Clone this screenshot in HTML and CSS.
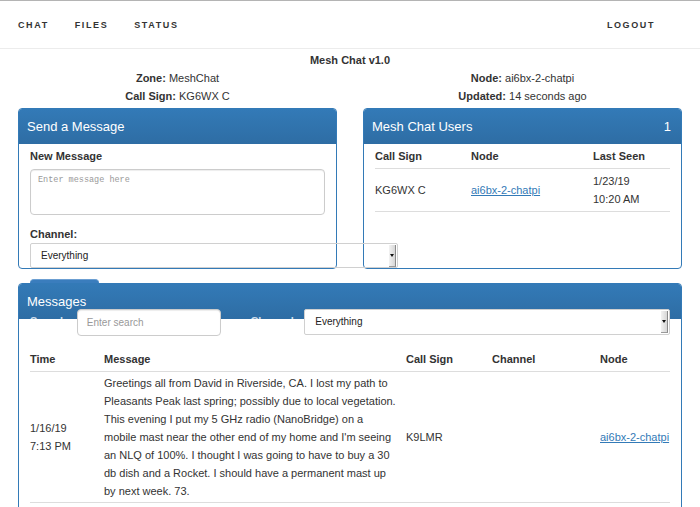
FILE: index.html
```html
<!DOCTYPE html>
<html lang="en">
<head>
<meta charset="utf-8">
<title>Mesh Chat</title>
<link rel="stylesheet" href="styles.css">
</head>
<body>
<nav class="topnav">
  <div class="nav-left">
    <a class="nav-link">CHAT</a>
    <a class="nav-link">FILES</a>
    <a class="nav-link">STATUS</a>
  </div>
  <a class="nav-link logout">LOGOUT</a>
</nav>
<main class="container">
  <div class="app-title">Mesh Chat v1.0</div>
  <div class="info">
    <div class="info-col">
      <div><b>Zone:</b> MeshChat</div>
      <div><b>Call Sign:</b> KG6WX C</div>
    </div>
    <div class="info-col">
      <div><b>Node:</b> ai6bx-2-chatpi</div>
      <div><b>Updated:</b> 14 seconds ago</div>
    </div>
  </div>

  <div class="top-row">
    <section class="panel">
      <div class="panel-heading">Send a Message</div>
      <div class="panel-body">
        <div class="field-label">New Message</div>
        <textarea class="textarea" placeholder="Enter message here"></textarea>
        <div class="field-label channel-label">Channel:</div>
        <div class="select select-send"><span class="select-text">Everything</span><span class="select-btn"></span></div>
      </div>
    </section>

    <section class="panel">
      <div class="panel-heading heading-split"><span>Mesh Chat Users</span><span>1</span></div>
      <div class="panel-body users-body">
        <table class="table users">
          <colgroup><col class="c-call"><col class="c-node"><col class="c-seen"></colgroup>
          <thead>
            <tr><th>Call Sign</th><th>Node</th><th>Last Seen</th></tr>
          </thead>
          <tbody>
            <tr><td>KG6WX C</td><td><a class="link">ai6bx-2-chatpi</a></td><td>1/23/19<br>10:20 AM</td></tr>
          </tbody>
        </table>
      </div>
    </section>
  </div>

  <div class="send-peek"></div>

  <section class="panel messages">
    <div class="panel-heading">Messages</div>
    <div class="panel-body">
      <div class="filters">
        <span class="hidden-label">Search:</span>
        <div class="input search">Enter search</div>
        <span class="hidden-label chan">Channel:</span>
        <div class="select select-filter"><span class="select-text">Everything</span><span class="select-btn"></span></div>
      </div>
      <table class="table msgs">
        <colgroup><col class="m-time"><col class="m-msg"><col class="m-call"><col class="m-chan"><col class="m-node"></colgroup>
        <thead>
          <tr><th>Time</th><th>Message</th><th>Call Sign</th><th>Channel</th><th>Node</th></tr>
        </thead>
        <tbody>
          <tr>
            <td>1/16/19<br>7:13 PM</td>
            <td class="msg-text">Greetings all from David in Riverside, CA. I lost my path to Pleasants Peak last spring; possibly due to local vegetation. This evening I put my 5 GHz radio (NanoBridge) on a mobile mast near the other end of my home and I'm seeing an NLQ of 100%. I thought I was going to have to buy a 30 db dish and a Rocket. I should have a permanent mast up by next week. 73.</td>
            <td>K9LMR</td>
            <td></td>
            <td><a class="link">ai6bx-2-chatpi</a></td>
          </tr>
        </tbody>
      </table>
    </div>
  </section>
</main>
</body>
</html>
```

FILE: styles.css
```css
* { box-sizing: border-box; }

html, body { height: 100%; }

body {
  margin: 0;
  border-top: 1px solid #b4b4b4;
  font-family: "Liberation Sans", Arial, sans-serif;
  font-size: 11px;
  line-height: 18px;
  color: #333;
  background: #fff;
  overflow: hidden;
}

.topnav {
  height: 48px;
  display: flex;
  align-items: center;
  justify-content: space-between;
  padding: 0 45px 0 18px;
  border-bottom: 1px solid #ececec;
}

.nav-left { display: flex; gap: 26px; }

.nav-link {
  font-size: 9px;
  font-weight: bold;
  letter-spacing: 1.6px;
  color: #333;
}

.container { padding: 2px 18px 0; }

.app-title {
  text-align: center;
  font-weight: bold;
}

.info {
  display: grid;
  grid-template-columns: minmax(0, 1fr) minmax(0, 1fr);
  gap: 26px;
  text-align: center;
  margin-bottom: 3px;
}

.top-row {
  display: grid;
  grid-template-columns: minmax(0, 1fr) minmax(0, 1fr);
  gap: 26px;
  height: 160px;
}

.panel {
  border: 1px solid #337ab7;
  border-radius: 4px;
  background: #fff;
  min-width: 0;
}

.panel-heading {
  height: 35px;
  line-height: 35px;
  padding: 0 8px;
  font-size: 13px;
  color: #fff;
  background: linear-gradient(#337ab7, #2e6da4);
  border-radius: 3px 3px 0 0;
}

.heading-split {
  display: flex;
  justify-content: space-between;
  padding-right: 10px;
}

.panel-body { padding: 3px 11px 0; }

.users-body { padding-top: 0; }

.field-label { font-weight: bold; }

.textarea {
  display: block;
  width: 100%;
  height: 46px;
  margin: 4px 0 10px;
  padding: 5px 7px;
  border: 1px solid #ccc;
  border-radius: 4px;
  resize: none;
  font-family: "Liberation Mono", monospace;
  font-size: 8.5px;
  box-shadow: inset 0 1px 1px rgba(0,0,0,.075);
}

.textarea::placeholder { color: #999; }

.select {
  display: flex;
  align-items: center;
  justify-content: space-between;
  height: 25px;
  padding: 0 1px 0 10px;
  border: 1px solid #d0d0d0;
  border-radius: 2px;
  font-size: 10px;
  line-height: 18px;
  color: #222;
}

/* the send form's select overflows its panel and lies over the users panel */
.select-send {
  position: relative;
  z-index: 1;
  width: 368px;
  background: transparent;
}

.select-btn {
  width: 7px;
  height: 22px;
  background: linear-gradient(90deg, #f2f2f2, #d6d6d6);
  border-right: 1px solid #8a8a8a;
  border-bottom: 1px solid #9a9a9a;
  display: flex;
  align-items: center;
  justify-content: center;
}

.select-btn::after {
  content: "";
  border-left: 2px solid transparent;
  border-right: 2px solid transparent;
  border-top: 3px solid #111;
}

.table {
  width: 100%;
  border-collapse: collapse;
  table-layout: fixed;
}

.table th {
  text-align: left;
  font-weight: bold;
  padding: 3px 0;
  border-bottom: 1px solid #ddd;
}

.table td {
  padding: 3px 0;
  vertical-align: middle;
  border-bottom: 1px solid #ddd;
}

.c-call { width: 96px; }
.c-node { width: 122px; }

.link {
  color: #337ab7;
  text-decoration: underline;
}

.send-peek {
  width: 69px;
  height: 4px;
  margin: 11px 0 0 12px;
  background: #3a7dbd;
  border-top: 1px solid #6c9fd2;
  border-radius: 4px 4px 0 0;
}

.messages {
  height: 260px;
}

.filters {
  display: flex;
  align-items: flex-start;
  margin-top: -13px;
}

.hidden-label {
  display: block;
  height: 3px;
  overflow: hidden;
  margin-top: 7px;
  width: 47px;
  font-weight: bold;
  line-height: 11px;
  color: rgba(235,242,250,.85);
}

.hidden-label.chan { margin-left: 29px; width: 54px; }

.input {
  height: 27px;
  line-height: 25px;
  padding: 0 9px;
  border: 1px solid #ccc;
  border-radius: 4px;
  background: #fff;
  font-size: 10px;
  color: #999;
  box-shadow: inset 0 1px 1px rgba(0,0,0,.075);
}

.search { width: 145px; }

.select-filter {
  width: 367px;
  height: 26px;
  background: #fff;
}

.msgs { margin-top: 10px; }

.msgs th { padding: 4px 0 3px; }

.msgs td { padding: 2px 0; }

.m-time { width: 74px; }
.m-msg { width: 302px; }
.m-call { width: 86px; }
.m-chan { width: 108px; }

.table td.msg-text { padding-right: 8px; }
```
